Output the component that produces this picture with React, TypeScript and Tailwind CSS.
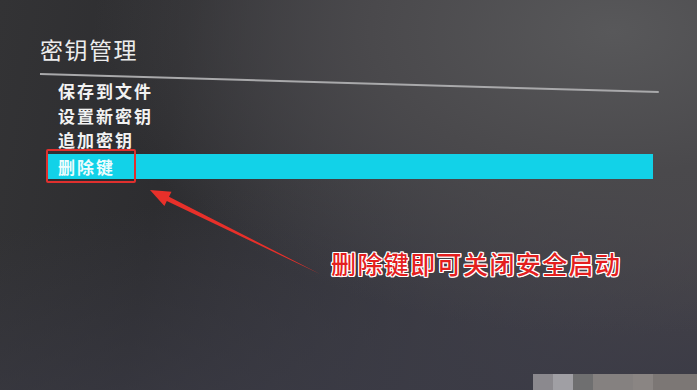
const menuItems = ["保存到文件", "设置新密钥", "追加密钥"];

const cjk = "font-['Noto_Sans_CJK_SC','Noto_Sans',sans-serif]";

export default function App() {
  return (
    <div
      className={`relative w-[697px] h-[390px] overflow-hidden ${cjk} bg-[radial-gradient(ellipse_at_88%_8%,#58585a_0%,#4a494c_28%,transparent_60%),linear-gradient(170deg,transparent_45%,#3b3b46_100%),linear-gradient(100deg,#333335_0%,#2d2d30_25%,#38383e_55%,#444349_80%,#4f4a4b_100%)]`}
    >
      <div className="pt-[36px] pl-[40px]">
        <h1 className="text-[23px] leading-[26px] tracking-[1.5px] text-[#ececec]">
          密钥管理
        </h1>
        <div className="mt-[11px] h-[2px] w-[619px] bg-[#a9a9ab] origin-left rotate-[1.67deg]" />

        <ul className="mt-[4px]">
          {menuItems.map((item) => (
            <li
              key={item}
              className="pl-[18px] text-[17px] leading-[24.5px] tracking-[2px] font-bold text-[#f2f2f2]"
            >
              {item}
            </li>
          ))}
          <li className="ml-[6px] w-[607px] h-[25px] mt-[1.5px] bg-[#12d2e8] pl-[12px] text-[17px] leading-[25px] tracking-[2px] font-bold text-[#eefcfd]">
            删除键
          </li>
        </ul>
      </div>

      {/* annotation: red frame around the selected item */}
      <div className="absolute left-[46px] top-[149px] w-[90px] h-[34px] border-2 border-[#e0302e] rounded-[2px]" />

      {/* annotation arrow */}
      <svg
        className="absolute inset-0 pointer-events-none"
        width="697"
        height="390"
        viewBox="0 0 697 390"
      >
        <polygon
          points="320,274 166.8,201.1 164.4,206.1 150,190 171.5,191.7 169,196.7"
          fill="#e8302a"
        />
      </svg>

      <p className="absolute left-[331px] top-[251px] text-[25px] leading-[25px] tracking-[1.4px] font-medium text-[#e41f1f] [text-shadow:1px_0_0_#fff,-1px_0_0_#fff,0_1px_0_#fff,0_-1px_0_#fff,1px_1px_0_#fff,-1px_-1px_0_#fff,1px_-1px_0_#fff,-1px_1px_0_#fff]">
        删除键即可关闭安全启动
      </p>

      {/* blurred watermark blocks */}
      <div className="absolute right-0 bottom-0 flex h-[16px]">
        <div className="w-[20px] bg-[#8b898e]" />
        <div className="w-[20px] bg-[#a09fa4]" />
        <div className="w-[20px] bg-[#6f6f70]" />
        <div className="w-[40px] bg-[#858180]" />
        <div className="w-[20px] bg-[#8a8583]" />
        <div className="w-[44px] bg-[#7c7775]" />
      </div>
    </div>
  );
}
